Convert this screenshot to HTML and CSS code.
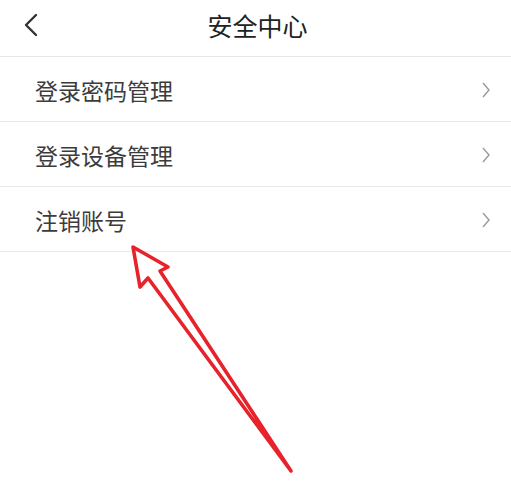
FILE: index.html
```html
<!DOCTYPE html>
<html lang="zh">
<head>
<meta charset="utf-8">
<link rel="stylesheet" href="styles.css">
</head>
<body>
<div class="page">
  <header class="topbar">
    <span class="back">
      <svg width="16" height="24" viewBox="0 0 16 24"><path d="M13 2 L3 12 L13 22" fill="none" stroke="#333" stroke-width="2.4" stroke-linecap="round" stroke-linejoin="round"/></svg>
    </span>
    <h1 class="title">安全中心</h1>
  </header>
  <ul class="menu">
    <li class="item"><span class="label">登录密码管理</span><svg class="chev" width="10" height="16" viewBox="0 0 10 16"><path d="M2 1 L8 8 L2 15" fill="none" stroke="#9a9a9a" stroke-width="1.4"/></svg></li>
    <li class="item"><span class="label">登录设备管理</span><svg class="chev" width="10" height="16" viewBox="0 0 10 16"><path d="M2 1 L8 8 L2 15" fill="none" stroke="#9a9a9a" stroke-width="1.4"/></svg></li>
    <li class="item"><span class="label">注销账号</span><svg class="chev" width="10" height="16" viewBox="0 0 10 16"><path d="M2 1 L8 8 L2 15" fill="none" stroke="#9a9a9a" stroke-width="1.4"/></svg></li>
  </ul>
  <svg class="arrow" width="511" height="484" viewBox="0 0 511 484">
    <path d="M133 247 L168 267 L160 271 L291 471 L148 278 L140 287 Z" fill="none" stroke="#e8222b" stroke-width="3.6" stroke-linejoin="round" stroke-linecap="round"/>
  </svg>
</div>
</body>
</html>
```
FILE: styles.css
```css
html, body {
  margin: 0;
  padding: 0;
  background: #fff;
}
.page {
  position: relative;
  width: 511px;
  height: 484px;
  overflow: hidden;
  font-family: "Noto Sans CJK SC", "Noto Sans", sans-serif;
}
.topbar {
  height: 56px;
  border-bottom: 1px solid #e6e6e6;
  display: flex;
  align-items: center;
  justify-content: center;
  position: relative;
}
.back {
  position: absolute;
  left: 23px;
  top: 13px;
  display: flex;
}
.title {
  margin: 0;
  font-size: 25px;
  font-weight: 400;
  color: #222;
  line-height: 1;
  margin-top: -5px;
  margin-left: 4px;
}
.menu {
  list-style: none;
  margin: 0;
  padding: 0;
}
.item {
  height: 64px;
  border-bottom: 1px solid #e8e8e8;
  display: flex;
  align-items: center;
  justify-content: space-between;
  padding: 0 20px 0 35px;
}
.label {
  font-size: 23px;
  color: #3c3c3c;
  line-height: 1;
  margin-top: 2px;
}
.chev {
  display: block;
  margin-top: 2px;
}
.arrow {
  position: absolute;
  left: 0;
  top: 0;
  pointer-events: none;
}
```
